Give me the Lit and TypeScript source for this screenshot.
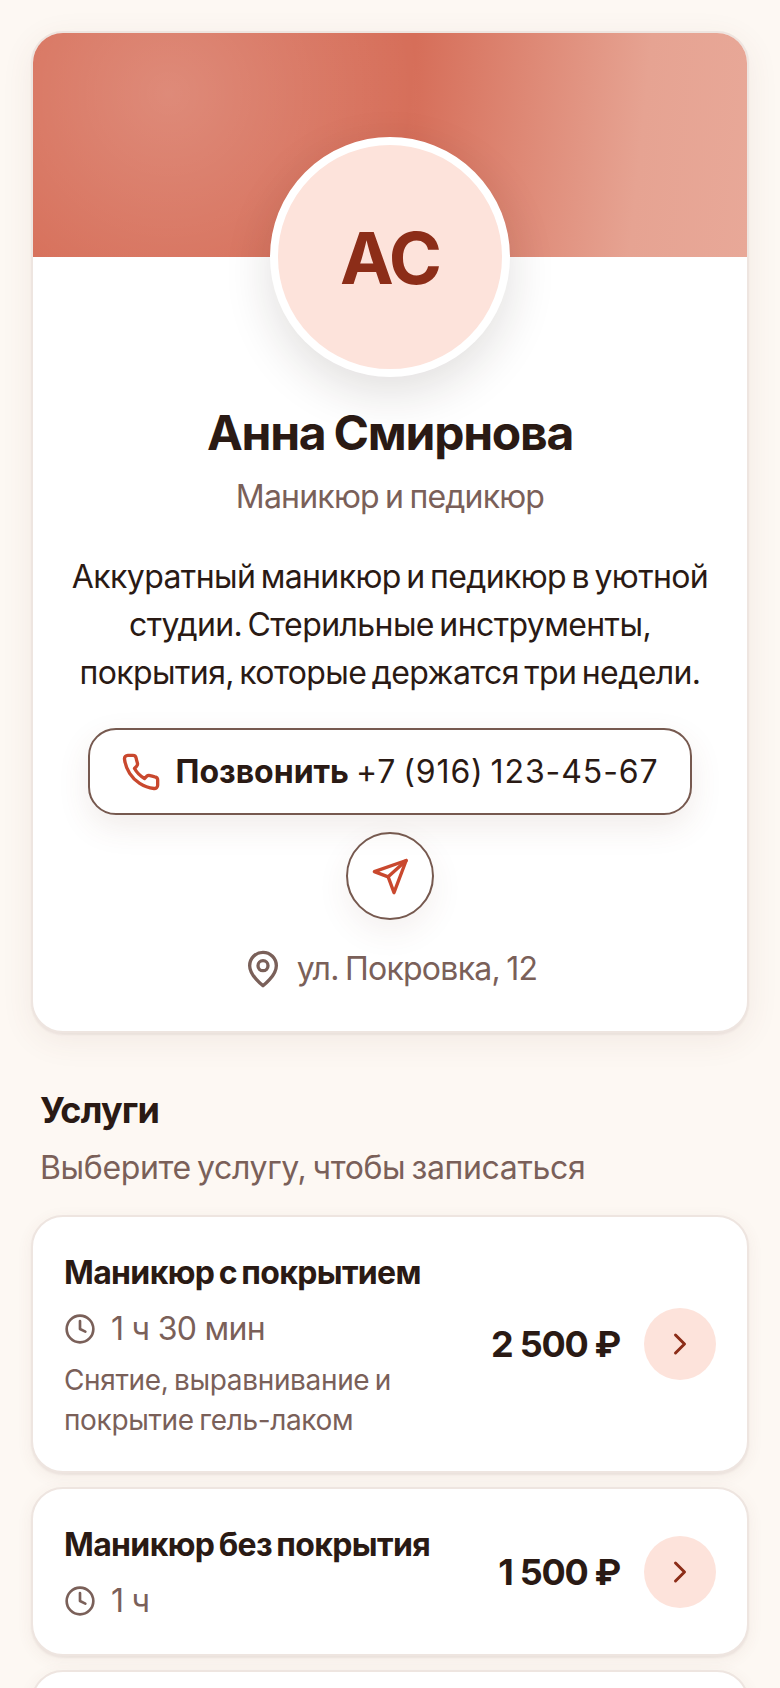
import { LitElement, html, css, svg } from "lit";
import { customElement } from "lit/decorators.js";

const clock = svg`<circle cx="12" cy="12" r="10"/><path d="M12 6v6l4 2"/>`;

@customElement("app-root")
export class AppRoot extends LitElement {
  static styles = css`
    :host { display: block; height: 1688px; overflow: hidden; background: #fdf8f3; font-family: "Inter", "Noto Sans", sans-serif; color: #2a1a14; }
    * { box-sizing: border-box; }
    .page { padding: 31px 31px 0; }
    .profile { background: #fff; border-radius: 32px; border: 2px solid #eee5e0; overflow: hidden; box-shadow: 0 8px 32px rgba(120,70,50,.08), 0 2px 2px rgba(60,40,30,.06); display: flex; flex-direction: column; align-items: center; height: 1002px; }
    .hero { align-self: stretch; height: 224px; flex: none; background: radial-gradient(circle at 19% 27%, rgba(255,255,255,.2), rgba(255,255,255,0) 42%), linear-gradient(96deg, #d66d57 0%, #d66e59 52%, #e6a392 84%, #e8a898 100%); }
    .avatar { width: 240px; height: 240px; flex: none; margin-top: -120px; border-radius: 50%; border: 8px solid #fff; background: #fde3db; color: #8c2d18; font: 700 72px "Inter", sans-serif; letter-spacing: -2px; display: flex; align-items: center; justify-content: center; box-shadow: 0 16px 48px rgba(40,30,20,.14); position: relative; }
    h1 { margin: 26px 0 0; font-size: 48px; line-height: 60px; font-weight: 700; letter-spacing: -1.25px; word-spacing: -2px; }
    .role { margin-top: 12px; font-size: 32px; line-height: 44px; color: #7a6059; letter-spacing: -.8px; word-spacing: -2px; }
    .bio { margin: 34px 0 0; width: 660px; text-align: center; font-size: 32px; line-height: 48px; letter-spacing: -.6px; word-spacing: -3px; }
    .call { margin-top: 31px; width: 604px; height: 87px; flex: none; border: 2px solid #76594f; border-radius: 28px; display: flex; align-items: center; justify-content: center; gap: 14px; font-size: 32px; box-shadow: 0 12px 32px rgba(120,70,50,.1); letter-spacing: .9px; word-spacing: -3px; white-space: nowrap; }
    .call b { font-weight: 700; letter-spacing: 0; }
    .call svg, .send svg, .addr svg, .time svg, .go svg { fill: none; stroke-linecap: round; stroke-linejoin: round; flex: none; }
    .call svg { width: 40px; height: 40px; stroke: #c9482e; stroke-width: 2; }
    .send { margin-top: 17px; width: 88px; height: 88px; flex: none; border: 2px solid #76594f; border-radius: 50%; display: flex; align-items: center; justify-content: center; box-shadow: 0 12px 32px rgba(120,70,50,.08); }
    .send svg { width: 40px; height: 40px; stroke: #c9482e; stroke-width: 2; }
    .addr { margin-top: 27px; display: flex; align-items: center; gap: 14px; color: #7a6059; font-size: 32px; letter-spacing: -.75px; word-spacing: -2px; line-height: 44px; }
    .addr svg { width: 40px; height: 40px; stroke: #7a6059; stroke-width: 2; }
    .head { padding: 0 9px; margin-top: 52px; }
    h2 { margin: 0; font-size: 36px; line-height: 50px; font-weight: 700; letter-spacing: -.8px; }
    .sub { margin-top: 11px; color: #7a6059; font-size: 32px; line-height: 44px; letter-spacing: -.35px; word-spacing: -2.5px; }
    .list { margin-top: 25px; display: flex; flex-direction: column; gap: 14px; }
    .svc { background: #fff; border: 2px solid #eee5e0; border-radius: 32px; padding: 31px; display: flex; align-items: center; gap: 24px; box-shadow: 0 4px 16px rgba(120,70,50,.07), 0 2px 2px rgba(60,40,30,.06); }
    .svc.empty { height: 168px; flex: none; }
    .info { flex: 1; min-width: 0; padding-top: 3px; }
    .name { font-size: 32px; line-height: 44px; font-weight: 700; letter-spacing: -.65px; word-spacing: -2.5px; }
    .time { margin-top: 12px; display: flex; align-items: center; gap: 15px; color: #7a6059; font-size: 32px; line-height: 44px; letter-spacing: -.7px; }
    .time svg { width: 32px; height: 32px; stroke: #7a6059; stroke-width: 2; }
    .desc { margin-top: 9px; width: 360px; color: #7a6059; font-size: 28px; line-height: 40px; letter-spacing: -.35px; word-spacing: -2px; }
    .price { font-size: 36px; font-weight: 700; white-space: nowrap; letter-spacing: -1.3px; }
    .go { width: 72px; height: 72px; flex: none; border-radius: 50%; background: #fde3db; display: flex; align-items: center; justify-content: center; }
    .go svg { width: 36px; height: 36px; stroke: #8c2d18; stroke-width: 2; }
  `;

  private svc(name: string, time: string, price: string, desc = "") {
    return html`<div class="svc">
      <div class="info">
        <div class="name">${name}</div>
        <div class="time"><svg viewBox="0 0 24 24">${clock}</svg>${time}</div>
        ${desc ? html`<div class="desc">${desc}</div>` : ""}
      </div>
      <div class="price">${price}</div>
      <div class="go"><svg viewBox="0 0 24 24"><path d="m9 18 6-6-6-6"/></svg></div>
    </div>`;
  }

  render() {
    return html`<div class="page">
      <div class="profile">
        <div class="hero"></div>
        <div class="avatar">АС</div>
        <h1>Анна Смирнова</h1>
        <div class="role">Маникюр и педикюр</div>
        <p class="bio">Аккуратный маникюр и педикюр в уютной студии. Стерильные инструменты, покрытия, которые держатся три недели.</p>
        <div class="call"><svg viewBox="0 0 24 24"><path d="M22 16.9v3a2 2 0 0 1-2.2 2 19.8 19.8 0 0 1-8.6-3.1 19.5 19.5 0 0 1-6-6A19.8 19.8 0 0 1 2.1 4.2 2 2 0 0 1 4.1 2h3a2 2 0 0 1 2 1.7c.1 1 .4 1.9.7 2.8a2 2 0 0 1-.5 2.1L8.1 9.9a16 16 0 0 0 6 6l1.3-1.3a2 2 0 0 1 2.1-.4c.9.3 1.8.5 2.8.7a2 2 0 0 1 1.7 2z"/></svg><span><b>Позвонить</b> +7 (916) 123-45-67</span></div>
        <div class="send"><svg viewBox="0 0 24 24"><path d="M2.6 9.4 21.7 2.7 14.4 22l-3.5-9.5z"/><path d="M21.7 2.7 10.9 12.5"/></svg></div>
        <div class="addr"><svg viewBox="0 0 24 24"><path d="M20 10c0 6-8 12-8 12s-8-6-8-12a8 8 0 0 1 16 0z"/><circle cx="12" cy="10" r="3"/></svg>ул. Покровка, 12</div>
      </div>
      <div class="head"><h2>Услуги</h2><div class="sub">Выберите услугу, чтобы записаться</div></div>
      <div class="list">
        ${this.svc("Маникюр с покрытием", "1 ч 30 мин", "2 500 ₽", "Снятие, выравнивание и покрытие гель-лаком")}
        ${this.svc("Маникюр без покрытия", "1 ч", "1 500 ₽")}
        <div class="svc empty"></div>
      </div>
    </div>`;
  }
}
